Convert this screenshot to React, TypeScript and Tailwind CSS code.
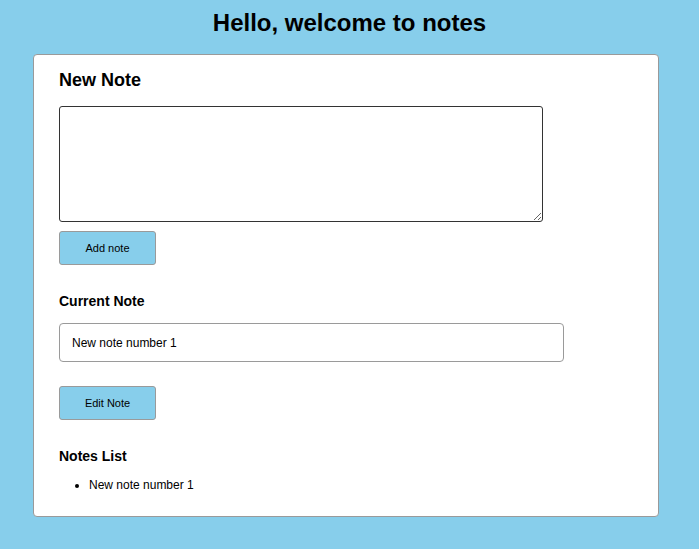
import React, { useState } from 'react';

const App: React.FC = () => {
  const [draft, setDraft] = useState('');
  const [current, setCurrent] = useState('New note number 1');
  const [notes, setNotes] = useState<string[]>(['New note number 1']);

  const addNote = () => {
    const text = draft.trim() || `New note number ${notes.length + 1}`;
    setNotes(prev => [...prev, text]);
    setDraft('');
  };

  const editNote = () => {
    setNotes(prev => prev.map((n, i) => (i === 0 ? current : n)));
  };

  return (
    <div className="min-h-[549px] bg-[#87ceeb] px-[33px] pt-[9px] pb-[31px] font-['Liberation_Sans',Arial,sans-serif] text-black">
      <h1 className="text-center text-[24px] leading-[28px] font-bold">Hello, welcome to notes</h1>

      <div className="mt-[17px] w-[626px] rounded-[4px] border border-[#9a9a9a] bg-white pl-[25px] pt-[14px] pb-[23px]">
        <h2 className="text-[18px] leading-[22px] font-bold">New Note</h2>
        <textarea
          value={draft}
          onChange={e => setDraft(e.target.value)}
          className="mt-[15px] block h-[116px] w-[484px] rounded-[3px] border border-[#333] p-2 text-[12px] outline-none"
        />
        <button
          onClick={addNote}
          className="mt-[9px] block h-[34px] w-[97px] rounded-[3px] border border-[#9a9a9a] bg-[#87ceeb] text-[11px]"
        >
          Add note
        </button>

        <h3 className="mt-[27px] text-[14px] leading-[18px] font-bold">Current Note</h3>
        <input
          value={current}
          onChange={e => setCurrent(e.target.value)}
          className="mt-[13px] block h-[39px] w-[505px] rounded-[4px] border border-[#9a9a9a] px-[12px] text-[12px] outline-none"
        />
        <button
          onClick={editNote}
          className="mt-[24px] block h-[34px] w-[97px] rounded-[3px] border border-[#9a9a9a] bg-[#87ceeb] text-[11px]"
        >
          Edit Note
        </button>

        <h3 className="mt-[27px] text-[14px] leading-[18px] font-bold">Notes List</h3>
        <ul className="mt-[12px] list-disc pl-[30px] text-[12px] leading-[16px]">
          {notes.map((n, i) => (
            <li key={i}>{n}</li>
          ))}
        </ul>
      </div>
    </div>
  );
};

export default App;
